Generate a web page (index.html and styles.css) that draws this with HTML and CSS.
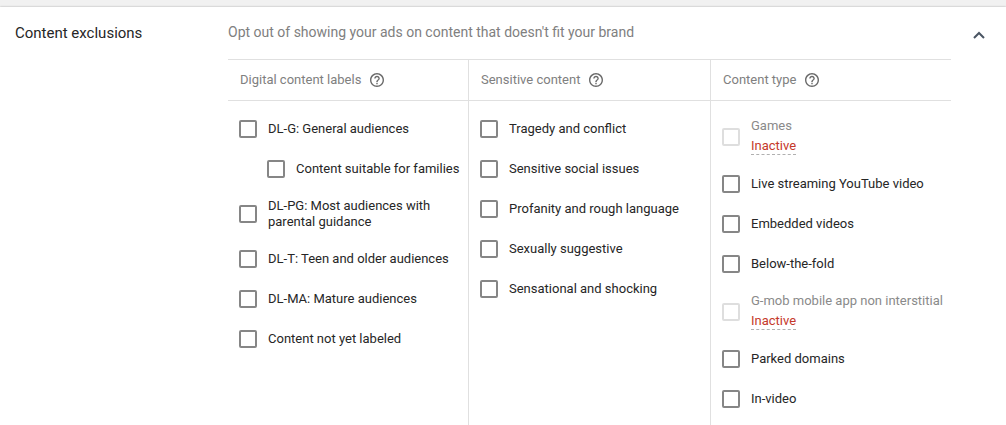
FILE: index.html
```
<!DOCTYPE html>
<html lang="en">

<head>
    <meta charset="UTF-8">
    <meta name="viewport" content="width=device-width, initial-scale=1.0">
    <title>Content exclusions</title>
    <link rel="stylesheet" href="styles.css">
</head>

<body>

    <!-- question mark icon used in every column header -->
    <svg class="sprite" aria-hidden="true">
        <symbol id="help" viewBox="2 2 20 20">
            <path d="M11 18h2v-2h-2v2zm1-16C6.48 2 2 6.48 2 12s4.48 10 10 10 10-4.48 10-10S17.52 2 12 2zm0 18c-4.41 0-8-3.59-8-8s3.59-8 8-8 8 3.59 8 8-3.59 8-8 8zm0-14c-2.21 0-4 1.79-4 4h2c0-1.1.9-2 2-2s2 .9 2 2c0 2-3 1.75-3 5h2c0-2.25 3-2.5 3-5 0-2.21-1.79-4-4-4z" />
        </symbol>
    </svg>

    <section class="panel">
        <h2 class="title">Content exclusions</h2>

        <div class="content">
            <p class="subtitle">Opt out of showing your ads on content that doesn't fit your brand</p>

            <div class="columns">
                <div class="column">
                    <div class="column-header">
                        <h3>Digital content labels</h3>
                        <button class="help" type="button" aria-label="Help"><svg><use href="#help" /></svg></button>
                    </div>
                    <div class="options">
                        <label class="option"><input type="checkbox"><span>DL-G: General audiences</span></label>
                        <label class="option child"><input type="checkbox"><span>Content suitable for families</span></label>
                        <label class="option"><input type="checkbox"><span>DL-PG: Most audiences with parental guidance</span></label>
                        <label class="option"><input type="checkbox"><span>DL-T: Teen and older audiences</span></label>
                        <label class="option"><input type="checkbox"><span>DL-MA: Mature audiences</span></label>
                        <label class="option"><input type="checkbox"><span>Content not yet labeled</span></label>
                    </div>
                </div>

                <div class="column">
                    <div class="column-header">
                        <h3>Sensitive content</h3>
                        <button class="help" type="button" aria-label="Help"><svg><use href="#help" /></svg></button>
                    </div>
                    <div class="options">
                        <label class="option"><input type="checkbox"><span>Tragedy and conflict</span></label>
                        <label class="option"><input type="checkbox"><span>Sensitive social issues</span></label>
                        <label class="option"><input type="checkbox"><span>Profanity and rough language</span></label>
                        <label class="option"><input type="checkbox"><span>Sexually suggestive</span></label>
                        <label class="option"><input type="checkbox"><span>Sensational and shocking</span></label>
                    </div>
                </div>

                <div class="column">
                    <div class="column-header">
                        <h3>Content type</h3>
                        <button class="help" type="button" aria-label="Help"><svg><use href="#help" /></svg></button>
                    </div>
                    <div class="options">
                        <label class="option disabled">
                            <input type="checkbox" disabled>
                            <span class="stack"><span>Games</span><span class="status">Inactive</span></span>
                        </label>
                        <label class="option"><input type="checkbox"><span>Live streaming YouTube video</span></label>
                        <label class="option"><input type="checkbox"><span>Embedded videos</span></label>
                        <label class="option"><input type="checkbox"><span>Below-the-fold</span></label>
                        <label class="option disabled">
                            <input type="checkbox" disabled>
                            <span class="stack"><span>G-mob mobile app non interstitial</span><span class="status">Inactive</span></span>
                        </label>
                        <label class="option"><input type="checkbox"><span>Parked domains</span></label>
                        <label class="option"><input type="checkbox"><span>In-video</span></label>
                    </div>
                </div>
            </div>
        </div>

        <button class="collapse" type="button" aria-label="Collapse">
            <svg viewBox="0 0 14 8"><path d="M2 7l5-5 5 5" /></svg>
        </button>
    </section>

</body>

</html>
```
FILE: styles.css
```
* {
    box-sizing: border-box;
}

body {
    display: flex;
    flex-direction: column;
    min-height: 100vh;
    margin: 0;
    padding-top: 7px;
    background: #f1f1f1;
    color: #262626;
    font-family: Roboto, sans-serif;
    font-size: 13px;
    line-height: 16px;
}

h2,
h3,
p {
    margin: 0;
    font-weight: 400;
}

button {
    display: flex;
    padding: 0;
    border: 0;
    background: none;
    cursor: pointer;
}

.sprite {
    display: none;
}

.panel {
    display: flex;
    flex: 1;
    padding-left: 15px;
    background: #fff;
    box-shadow: 0 0 2px rgba(0, 0, 0, .3);
}

.title {
    flex: none;
    width: 213px;
    padding-top: 16px;
    font-size: 15px;
    line-height: 20px;
}

.content {
    display: flex;
    flex: 1;
    flex-direction: column;
}

.subtitle {
    padding: 15px 0 17px;
    color: #808080;
    font-size: 14px;
    line-height: 20px;
}

.columns {
    display: grid;
    flex: 1;
    grid-template-columns: 241fr 242fr 240fr;
    border-top: 1px solid #e0e0e0;
}

.column + .column {
    border-left: 1px solid #e0e0e0;
    margin-left: -1px;
}

.column-header {
    display: flex;
    align-items: center;
    gap: 9px;
    height: 41px;
    padding: 0 12px;
    border-bottom: 1px solid #e0e0e0;
    color: #808080;
}

.column-header h3 {
    font-size: 13px;
}

.help svg {
    width: 14px;
    height: 14px;
    fill: #6b6b6b;
}

.options {
    padding-top: 8px;
}

.option {
    display: flex;
    align-items: center;
    gap: 11px;
    min-height: 40px;
    padding: 9px 0 9px 11px;
}

.child {
    padding-left: 39px;
}

.option input {
    appearance: none;
    flex: none;
    width: 18px;
    height: 18px;
    margin: 0;
    border: 2px solid #868686;
    border-radius: 2px;
    background: #fff;
}

.disabled {
    color: #8a8a8a;
}

.disabled input {
    border-color: #dedede;
}

.stack {
    display: flex;
    flex-direction: column;
    align-items: flex-start;
    gap: 4px;
}

.status {
    border-bottom: 1px dashed #b0b0b0;
    color: #c5392b;
}

.collapse {
    flex: none;
    align-self: flex-start;
    justify-content: center;
    width: 55px;
    padding-top: 24px;
}

.collapse svg {
    width: 14px;
    height: 8px;
    fill: none;
    stroke: #4a5563;
    stroke-width: 2;
}
```
